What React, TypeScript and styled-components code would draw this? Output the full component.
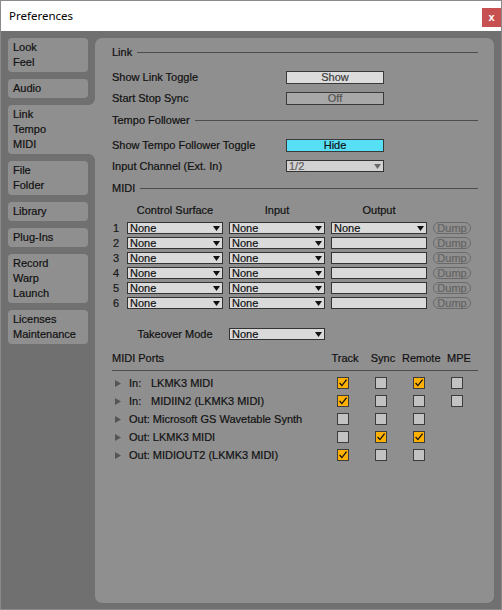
import React from "react";
import styled, { createGlobalStyle, css } from "styled-components";

const GlobalStyle = createGlobalStyle`
  html, body {
    margin: 0;
    padding: 0;
    background: #ffffff;
  }
  body {
    font-family: "Liberation Sans", Arial, sans-serif;
  }
`;

const PANEL = "#8f8f8f";

const Window = styled.div`
  width: 502px;
  height: 610px;
  box-sizing: border-box;
  border: 1px solid #8a8a8a;
  display: flex;
  flex-direction: column;
  background: #707070;
`;

const TitleBar = styled.header`
  height: 30px;
  flex: none;
  background: #ffffff;
  display: flex;
  align-items: flex-start;
  justify-content: space-between;
`;

const Title = styled.div`
  font-family: "Noto Sans", "Liberation Sans", sans-serif;
  font-size: 11.5px;
  line-height: 30px;
  color: #000;
  padding-left: 8px;
`;

const CloseButton = styled.div`
  margin-top: 7px;
  width: 19px;
  height: 19px;
  background: #c75050;
  color: #ffffff;
  font: bold 11px "Liberation Sans", sans-serif;
  display: flex;
  align-items: center;
  justify-content: center;
  padding-bottom: 1px;
  box-sizing: border-box;
`;

const Body = styled.div`
  flex: 1;
  min-height: 0;
  display: flex;
  gap: 7px;
  padding: 7px 7px 6px 7px;
  -webkit-text-stroke: 0.2px currentColor;
`;

const Sidebar = styled.nav`
  width: 80px;
  flex: none;
  display: flex;
  flex-direction: column;
  gap: 7px;
`;

const Tab = styled.div<{ $active?: boolean }>`
  position: relative;
  box-sizing: border-box;
  background: ${PANEL};
  padding: 2px 5px;
  font-size: 11px;
  line-height: 15px;
  color: #111;
  border-radius: 4px;
  width: 100%;
  ${(p) =>
    p.$active &&
    css`
      width: calc(100% + 7px);
      border-radius: 4px 0 0 4px;
      &::before,
      &::after {
        content: "";
        position: absolute;
        right: 0;
        width: 6px;
        height: 6px;
      }
      &::before {
        top: -6px;
        background: radial-gradient(circle at 0 0, transparent 5.5px, ${PANEL} 6px);
      }
      &::after {
        bottom: -6px;
        background: radial-gradient(circle at 0 100%, transparent 5.5px, ${PANEL} 6px);
      }
    `}
`;

const TabLine = styled.div`
  white-space: nowrap;
`;

const Panel = styled.main`
  flex: 1;
  background: ${PANEL};
  border-radius: 7px;
  padding: 3px 16px 0 17px;
  font-size: 11px;
  color: #111;
`;

const SectionHeader = styled.div`
  height: 23px;
  margin-bottom: 3px;
  display: flex;
  align-items: center;
  gap: 5px;
  line-height: 13px;
  &::after {
    content: "";
    flex: 1;
    height: 1px;
    background: #4c4c4c;
  }
`;

const SettingRow = styled.div`
  height: 21px;
  display: flex;
  align-items: flex-start;
  padding-top: 4px;
  box-sizing: border-box;
`;

const SettingLabel = styled.span`
  width: 174px;
  flex: none;
  line-height: 13px;
`;

const toneStyles = {
  light: css`
    background: #dcdcdc;
    color: #3a3a3a;
  `,
  dim: css`
    background: #a8a8a8;
    color: #555;
  `,
  cyan: css`
    background: #57dff5;
    color: #111;
  `,
};

const ToggleButton = styled.div<{ $tone: keyof typeof toneStyles }>`
  width: 98px;
  height: 13px;
  box-sizing: border-box;
  border: 1px solid #3a3a3a;
  text-align: center;
  line-height: 11px;
  ${(p) => toneStyles[p.$tone]}
`;

const Select = styled.div<{ $disabled?: boolean; $width?: number }>`
  height: 12px;
  box-sizing: border-box;
  width: ${(p) => (p.$width ? `${p.$width}px` : "100%")};
  border: 1px solid #333;
  background: ${(p) => (p.$disabled ? "#d2d2d2" : "#dadada")};
  color: ${(p) => (p.$disabled ? "#5e5e5e" : "#111")};
  display: flex;
  align-items: center;
  justify-content: space-between;
  padding: 0 2px 0 2px;
  line-height: 10px;
  white-space: nowrap;
  svg {
    flex: none;
    fill: ${(p) => (p.$disabled ? "#6a6a6a" : "#111")};
  }
`;

const DeviceGrid = styled.div`
  display: grid;
  grid-template-columns: 9px 96px 96px 96px 38px;
  column-gap: 6px;
  row-gap: 3px;
  align-items: center;
`;

const ColumnHead = styled.div`
  text-align: center;
  line-height: 14px;
  margin-bottom: 2px;
`;

const RowNumber = styled.div`
  padding-left: 1px;
  line-height: 12px;
  color: #1a1a1a;
`;

const DumpButton = styled.div`
  height: 12px;
  box-sizing: border-box;
  border: 1px solid #6a6a6a;
  border-radius: 6px;
  color: #646464;
  text-align: center;
  line-height: 10px;
`;

const TakeoverGrid = styled(DeviceGrid)`
  margin-top: 19px;
`;

const TakeoverLabel = styled.div`
  text-align: center;
  line-height: 12px;
`;

const PortsGrid = styled.div`
  display: grid;
  grid-template-columns: 1fr 38px 38px 38px 38px;
`;

const PortsHead = styled.div<{ $center?: boolean }>`
  margin-top: 11px;
  height: 14px;
  line-height: 14px;
  padding-bottom: 5px;
  border-bottom: 1px solid #4c4c4c;
  text-align: ${(p) => (p.$center ? "center" : "left")};
`;

const PortList = styled.div`
  padding-top: 3px;
`;

const PortRow = styled.div`
  display: contents;
`;

const PortName = styled.div`
  height: 18px;
  display: flex;
  align-items: center;
  padding-left: 3px;
  white-space: nowrap;
`;

const Disclosure = styled.svg`
  flex: none;
  margin-right: 8px;
  fill: #555;
`;

const Prefix = styled.span`
  display: inline-block;
  box-sizing: border-box;
  min-width: 22px;
  padding-right: 3px;
`;

const CheckCell = styled.div`
  height: 18px;
  display: flex;
  align-items: center;
  justify-content: center;
  padding-right: 4px;
`;

const CheckBox = styled.span<{ $on: boolean }>`
  width: 12px;
  height: 12px;
  box-sizing: border-box;
  border: 1px solid #3c3c3c;
  background: ${(p) => (p.$on ? "#ffb000" : "#c2c2c2")};
  display: inline-flex;
  align-items: center;
  justify-content: center;
`;

const Arrow = () => (
  <svg width="7" height="5" viewBox="0 0 7 5">
    <path d="M0 0H7L3.5 5Z" />
  </svg>
);

const Check = ({ on }: { on: boolean }) => (
  <CheckBox $on={on}>
    {on && (
      <svg width="10" height="10" viewBox="0 0 10 10">
        <path d="M1.6 5 L3.9 7.6 L8.6 1.6" fill="none" stroke="#111" strokeWidth="1.3" />
      </svg>
    )}
  </CheckBox>
);

const tabs: { lines: string[]; active?: boolean }[] = [
  { lines: ["Look", "Feel"] },
  { lines: ["Audio"] },
  { lines: ["Link", "Tempo", "MIDI"], active: true },
  { lines: ["File", "Folder"] },
  { lines: ["Library"] },
  { lines: ["Plug-Ins"] },
  { lines: ["Record", "Warp", "Launch"] },
  { lines: ["Licenses", "Maintenance"] },
];

type Port = {
  dir: string;
  name: string;
  track: boolean;
  sync: boolean;
  remote: boolean;
  mpe: boolean | null;
};

const ports: Port[] = [
  { dir: "In:", name: "LKMK3 MIDI", track: true, sync: false, remote: true, mpe: false },
  { dir: "In:", name: "MIDIIN2 (LKMK3 MIDI)", track: true, sync: false, remote: false, mpe: false },
  { dir: "Out:", name: "Microsoft GS Wavetable Synth", track: false, sync: false, remote: false, mpe: null },
  { dir: "Out:", name: "LKMK3 MIDI", track: false, sync: true, remote: true, mpe: null },
  { dir: "Out:", name: "MIDIOUT2 (LKMK3 MIDI)", track: true, sync: false, remote: false, mpe: null },
];

export default function App() {
  return (
    <>
      <GlobalStyle />
      <Window>
        <TitleBar>
          <Title>Preferences</Title>
          <CloseButton>x</CloseButton>
        </TitleBar>
        <Body>
          <Sidebar>
            {tabs.map((t) => (
              <Tab key={t.lines.join()} $active={t.active}>
                {t.lines.map((l) => (
                  <TabLine key={l}>{l}</TabLine>
                ))}
              </Tab>
            ))}
          </Sidebar>
          <Panel>
            <SectionHeader>Link</SectionHeader>
            <SettingRow>
              <SettingLabel>Show Link Toggle</SettingLabel>
              <ToggleButton $tone="light">Show</ToggleButton>
            </SettingRow>
            <SettingRow>
              <SettingLabel>Start Stop Sync</SettingLabel>
              <ToggleButton $tone="dim">Off</ToggleButton>
            </SettingRow>

            <SectionHeader>Tempo Follower</SectionHeader>
            <SettingRow>
              <SettingLabel>Show Tempo Follower Toggle</SettingLabel>
              <ToggleButton $tone="cyan">Hide</ToggleButton>
            </SettingRow>
            <SettingRow>
              <SettingLabel>Input Channel (Ext. In)</SettingLabel>
              <Select $disabled $width={98}>
                <span>1/2</span>
                <Arrow />
              </Select>
            </SettingRow>

            <SectionHeader>MIDI</SectionHeader>
            <DeviceGrid>
              <span />
              <ColumnHead>Control Surface</ColumnHead>
              <ColumnHead>Input</ColumnHead>
              <ColumnHead>Output</ColumnHead>
              <span />
              {[1, 2, 3, 4, 5, 6].map((n) => (
                <React.Fragment key={n}>
                  <RowNumber>{n}</RowNumber>
                  <Select>
                    <span>None</span>
                    <Arrow />
                  </Select>
                  <Select>
                    <span>None</span>
                    <Arrow />
                  </Select>
                  {n === 1 ? (
                    <Select>
                      <span>None</span>
                      <Arrow />
                    </Select>
                  ) : (
                    <Select />
                  )}
                  <DumpButton>Dump</DumpButton>
                </React.Fragment>
              ))}
            </DeviceGrid>

            <TakeoverGrid>
              <span />
              <TakeoverLabel>Takeover Mode</TakeoverLabel>
              <Select>
                <span>None</span>
                <Arrow />
              </Select>
            </TakeoverGrid>

            <PortsGrid>
              <PortsHead>MIDI Ports</PortsHead>
              <PortsHead $center>Track</PortsHead>
              <PortsHead $center>Sync</PortsHead>
              <PortsHead $center>Remote</PortsHead>
              <PortsHead $center>MPE</PortsHead>
            </PortsGrid>
            <PortList>
              <PortsGrid>
                {ports.map((p, i) => (
                  <PortRow key={i}>
                    <PortName>
                      <Disclosure width="6" height="7" viewBox="0 0 6 7">
                        <path d="M0 0L6 3.5L0 7Z" />
                      </Disclosure>
                      <Prefix>{p.dir}</Prefix>
                      {p.name}
                    </PortName>
                    <CheckCell>
                      <Check on={p.track} />
                    </CheckCell>
                    <CheckCell>
                      <Check on={p.sync} />
                    </CheckCell>
                    <CheckCell>
                      <Check on={p.remote} />
                    </CheckCell>
                    <CheckCell>{p.mpe !== null && <Check on={p.mpe} />}</CheckCell>
                  </PortRow>
                ))}
              </PortsGrid>
            </PortList>
          </Panel>
        </Body>
      </Window>
    </>
  );
}
